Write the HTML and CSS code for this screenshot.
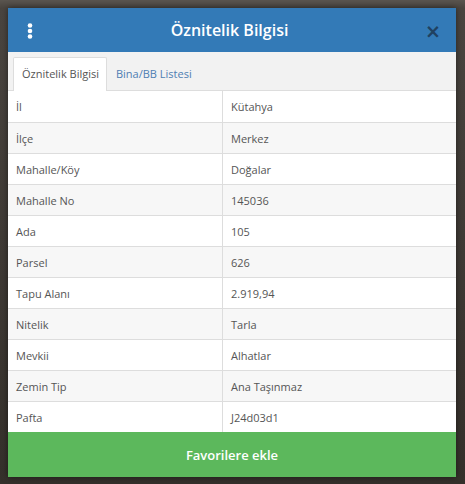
FILE: index.html
```html
<!DOCTYPE html>
<html lang="tr">
<head>
<meta charset="utf-8">
<link rel="stylesheet" href="styles.css">
</head>
<body>
<div class="modal">
  <div class="header">
    <span class="menu"><svg width="8" height="16" viewBox="0 0 8 16"><circle cx="4" cy="2.5" r="2.3" fill="#fff"/><circle cx="4" cy="8" r="2.3" fill="#fff"/><circle cx="4" cy="13.5" r="2.3" fill="#fff"/></svg></span>
    <h1 class="title">Öznitelik Bilgisi</h1>
    <span class="close">×</span>
  </div>
  <div class="tabs">
    <div class="tab active">Öznitelik Bilgisi</div>
    <div class="tab">Bina/BB Listesi</div>
  </div>
  <div class="table">
    <div class="row"><div class="cell">İl</div><div class="cell">Kütahya</div></div>
    <div class="row"><div class="cell">İlçe</div><div class="cell">Merkez</div></div>
    <div class="row"><div class="cell">Mahalle/Köy</div><div class="cell">Doğalar</div></div>
    <div class="row"><div class="cell">Mahalle No</div><div class="cell">145036</div></div>
    <div class="row"><div class="cell">Ada</div><div class="cell">105</div></div>
    <div class="row"><div class="cell">Parsel</div><div class="cell">626</div></div>
    <div class="row"><div class="cell">Tapu Alanı</div><div class="cell">2.919,94</div></div>
    <div class="row"><div class="cell">Nitelik</div><div class="cell">Tarla</div></div>
    <div class="row"><div class="cell">Mevkii</div><div class="cell">Alhatlar</div></div>
    <div class="row"><div class="cell">Zemin Tip</div><div class="cell">Ana Taşınmaz</div></div>
    <div class="row"><div class="cell">Pafta</div><div class="cell">J24d03d1</div></div>
  </div>
  <div class="fav">Favorilere ekle</div>
</div>
</body>
</html>
```
FILE: styles.css
```css
html, body {
  margin: 0;
  height: 100%;
}
body {
  background: #3d3934;
  background-image: linear-gradient(180deg, #5a554f 0, #4a4540 8px, #35302b 100%);
  padding: 8px;
  box-sizing: border-box;
  font-family: "Open Sans", "Noto Sans", sans-serif;
  color: #555;
}
.modal {
  width: 448px;
  background: #fff;
  box-shadow: 0 0 6px rgba(0,0,0,0.5);
}
.header {
  height: 44px;
  background: #337ab7;
  display: flex;
  align-items: center;
  padding: 0 15px 0 18px;
}
.menu {
  width: 8px;
  display: flex;
  margin-top: 2px;
}
.title {
  flex: 1;
  margin: 0;
  text-align: center;
  color: #fff;
  font-size: 16px;
  font-weight: 600;
  padding-left: 0;
}
.close {
  color: #1a2e44;
  opacity: 0.75;
  font-size: 19px;
  font-weight: 700;
  line-height: 1;
  font-family: "DejaVu Sans", sans-serif;
  margin-top: 2px;
}
.tabs {
  background: #f2f2f2;
  display: flex;
  padding: 5px 5px 0;
  border-bottom: 1px solid #ddd;
}
.tab {
  font-size: 11px;
  line-height: 16px;
  padding: 8px 7px 8px 8px;
  color: #4f7eb3;
  border: 1px solid transparent;
  border-bottom: none;
  margin-bottom: -1px;
}
.tab.active {
  background: #fff;
  color: #555;
  border-color: #ddd;
  border-radius: 2px 2px 0 0;
  padding-bottom: 9px;
}
.row {
  display: grid;
  grid-template-columns: 214px 1fr;
  height: 31px;
  box-sizing: border-box;
  border-top: 1px solid #ddd;
}
.row:first-child {
  border-top: none;
}
.row:nth-child(even) {
  background: #f7f7f7;
}
.cell {
  font-size: 11px;
  padding: 0 8px;
  display: flex;
  align-items: center;
}
.cell + .cell {
  border-left: 1px solid #ddd;
}
.fav {
  height: 45px;
  background: #5cb85c;
  color: #fff;
  font-size: 13px;
  font-weight: 600;
  display: flex;
  align-items: center;
  justify-content: center;
}
```
